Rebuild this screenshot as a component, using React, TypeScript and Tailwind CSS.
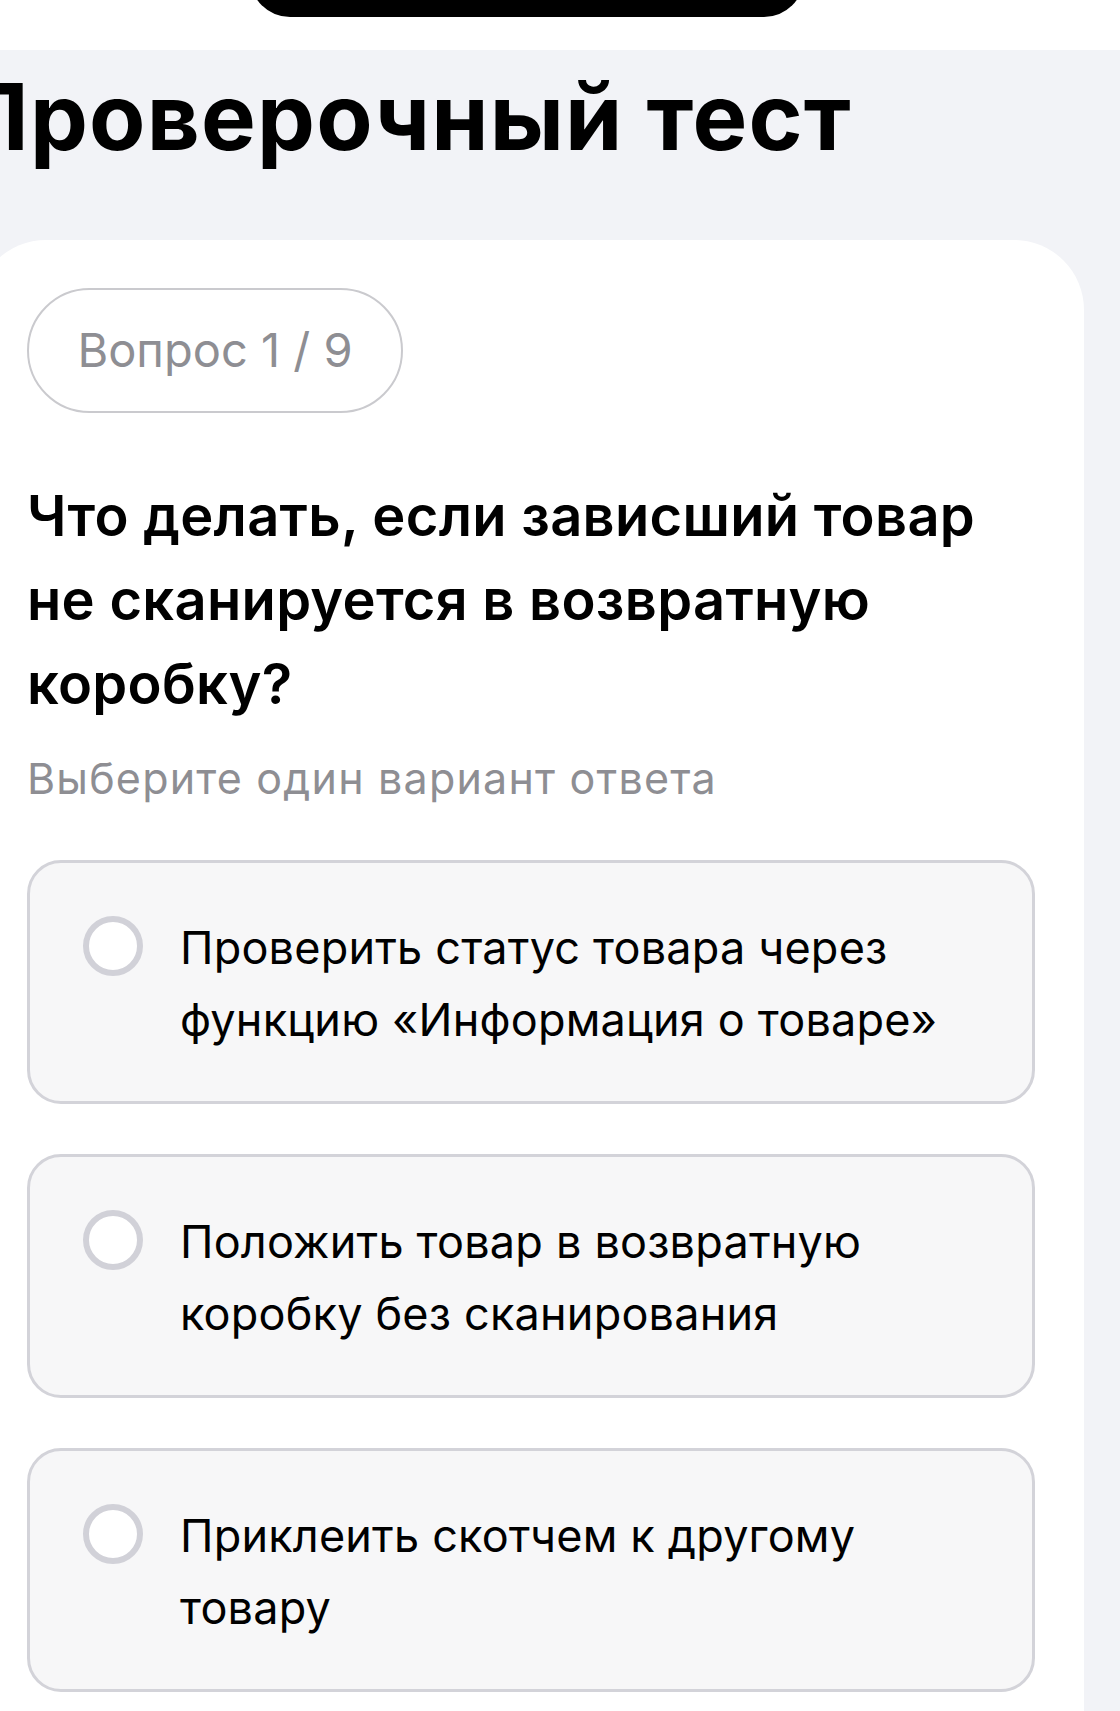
const options = [
  'Проверить статус товара через функцию «Информация о товаре»',
  'Положить товар в возвратную коробку без сканирования',
  'Приклеить скотчем к другому товару',
];

function OptionCard({ label }: { label: string }) {
  return (
    <button
      type="button"
      className="flex w-full items-start gap-[37px] rounded-[34px] border-[3px] border-[#d3d3d9] bg-[#f7f7f8] pl-[53px] pr-[56px] pt-[49px] pb-[45px] text-left"
    >
      <span className="mt-[4px] h-[60px] w-[60px] shrink-0 rounded-full border-[6px] border-[#d1d1d8] bg-white" />
      <span className="text-[45px] leading-[72px] tracking-[0.2px] text-black">{label}</span>
    </button>
  );
}

export default function App() {
  return (
    <div
      className="flex min-h-[1711px] w-[1120px] flex-col overflow-hidden bg-[#f2f3f7]"
      style={{ fontFamily: 'Inter, "Noto Sans", sans-serif' }}
    >
      <div className="flex h-[50px] shrink-0 bg-white">
        <div className="-mt-[23px] ml-[250px] h-[40px] w-[554px] rounded-b-[42px] bg-black" />
      </div>

      <h1 className="-ml-[40px] mt-[20px] whitespace-nowrap text-[92px] font-bold leading-[93px] tracking-[1.2px] text-black">
        Проверочный тест
      </h1>

      <div className="-ml-[24px] mt-[77px] w-[1108px] flex-1 rounded-t-[70px] bg-white pl-[51px] pr-[49px] pt-[48px] pb-[20px]">
        <div className="flex h-[125px] w-[376px] items-center justify-center rounded-full border-2 border-[#cacace] text-[47px] text-[#8e8e93]">
          Вопрос 1 / 9
        </div>

        <h2 className="mt-[61px] pr-[2px] text-[56px] font-semibold leading-[84px] tracking-[0.3px] text-black">
          Что делать, если зависший товар не сканируется в возвратную коробку?
        </h2>

        <p className="mt-[26px] text-[43px] leading-[52px] tracking-[1.2px] text-[#8e8e93]">
          Выберите один вариант ответа
        </p>

        <div className="mt-[56px] flex flex-col gap-[50px]">
          {options.map((label) => (
            <OptionCard key={label} label={label} />
          ))}
        </div>
      </div>
    </div>
  );
}
